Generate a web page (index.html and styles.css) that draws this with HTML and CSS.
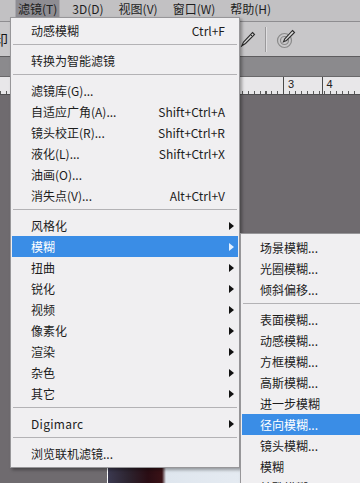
FILE: index.html
```html
<!DOCTYPE html>
<html lang="zh-CN">
<head>
    <meta charset="UTF-8">
    <meta name="viewport" content="width=device-width, initial-scale=1.0">
    <title>滤镜菜单</title>
    <link rel="stylesheet" href="styles.css">
</head>
<body>
    <div class="app">
        <div class="menubar">
            <span class="top-item active">滤镜(T)</span>
            <span class="top-item">3D(D)</span>
            <span class="top-item">视图(V)</span>
            <span class="top-item">窗口(W)</span>
            <span class="top-item">帮助(H)</span>
        </div>
        <div class="options">
            <span class="cut-label">印</span>
            <div class="tool-group">
                <svg class="tool" width="16" height="17" viewBox="0 0 16 17">
                    <path d="M12.5 1.5 L14.5 3.5 L5.5 12.5 L1.8 14.8 L3.5 11 Z" fill="#d8d8d8" stroke="#2d2d2d" stroke-width="1.1"/>
                    <path d="M10.5 3.5 L12.5 5.5" stroke="#2d2d2d" stroke-width="1"/>
                    <path d="M1.5 15.5 L4 13" stroke="#2d2d2d" stroke-width="1"/>
                </svg>
                <span class="tool-sep"></span>
                <svg class="tool" width="20" height="20" viewBox="0 0 20 20">
                    <circle cx="8.5" cy="11.5" r="7" fill="none" stroke="#8a8a8a" stroke-width="1.2"/>
                    <circle cx="8.5" cy="11.5" r="4" fill="none" stroke="#8a8a8a" stroke-width="1.2"/>
                    <path d="M16.5 1.5 L18.5 3.5 L10.5 11.5 L7.5 12.8 L8.8 9.8 Z" fill="#dcdcdc" stroke="#2d2d2d" stroke-width="1.1"/>
                </svg>
            </div>
        </div>
        <div class="tabs"></div>
        <div class="ruler">
            <span class="ruler-mark">3</span>
            <span class="ruler-mark">4</span>
        </div>
        <div class="canvas">
            <div class="photo"></div>
        </div>
    </div>

    <div class="menu menu-main">
        <div class="item"><span>动感模糊</span><span class="key">Ctrl+F</span><span></span></div>
        <div class="sep"></div>
        <div class="item"><span>转换为智能滤镜</span><span></span><span></span></div>
        <div class="sep"></div>
        <div class="item"><span>滤镜库(G)...</span><span></span><span></span></div>
        <div class="item"><span>自适应广角(A)...</span><span class="key">Shift+Ctrl+A</span><span></span></div>
        <div class="item"><span>镜头校正(R)...</span><span class="key">Shift+Ctrl+R</span><span></span></div>
        <div class="item"><span>液化(L)...</span><span class="key">Shift+Ctrl+X</span><span></span></div>
        <div class="item"><span>油画(O)...</span><span></span><span></span></div>
        <div class="item"><span>消失点(V)...</span><span class="key">Alt+Ctrl+V</span><span></span></div>
        <div class="sep"></div>
        <div class="item"><span>风格化</span><span></span><span class="arrow"></span></div>
        <div class="item active"><span>模糊</span><span></span><span class="arrow"></span></div>
        <div class="item"><span>扭曲</span><span></span><span class="arrow"></span></div>
        <div class="item"><span>锐化</span><span></span><span class="arrow"></span></div>
        <div class="item"><span>视频</span><span></span><span class="arrow"></span></div>
        <div class="item"><span>像素化</span><span></span><span class="arrow"></span></div>
        <div class="item"><span>渲染</span><span></span><span class="arrow"></span></div>
        <div class="item"><span>杂色</span><span></span><span class="arrow"></span></div>
        <div class="item"><span>其它</span><span></span><span class="arrow"></span></div>
        <div class="sep"></div>
        <div class="item"><span class="latin">Digimarc</span><span></span><span class="arrow"></span></div>
        <div class="sep"></div>
        <div class="item"><span>浏览联机滤镜...</span><span></span><span></span></div>
    </div>

    <div class="menu menu-sub">
        <div class="item"><span>场景模糊...</span></div>
        <div class="item"><span>光圈模糊...</span></div>
        <div class="item"><span>倾斜偏移...</span></div>
        <div class="sep"></div>
        <div class="item"><span>表面模糊...</span></div>
        <div class="item"><span>动感模糊...</span></div>
        <div class="item"><span>方框模糊...</span></div>
        <div class="item"><span>高斯模糊...</span></div>
        <div class="item"><span>进一步模糊</span></div>
        <div class="item active"><span>径向模糊...</span></div>
        <div class="item"><span>镜头模糊...</span></div>
        <div class="item"><span>模糊</span></div>
        <div class="item"><span>特殊模糊...</span></div>
    </div>
</body>
</html>
```

FILE: styles.css
```css
* {
    margin: 0;
    padding: 0;
    box-sizing: border-box;
}

body {
    width: 360px;
    height: 483px;
    overflow: hidden;
    position: relative;
    font-family: "Noto Sans CJK SC", "Microsoft YaHei", sans-serif;
    font-size: 12px;
    color: #1c1c1c;
    background: #6e6b6e;
}

.app {
    display: flex;
    flex-direction: column;
    height: 483px;
}

.app > div {
    flex-shrink: 0;
}

/* top menu bar */
.menubar {
    display: flex;
    align-items: flex-start;
    gap: 9px;
    height: 22px;
    padding-left: 15px;
    background: #c2c1c3;
    border-bottom: 1px solid #8e8d90;
}

.top-item {
    height: 17px;
    line-height: 17px;
    padding: 0 3px;
    color: #1e1e1e;
}

.top-item.active {
    background: #8e8d93;
    box-shadow: inset 1px 0 0 #a9a8ad, inset -1px 0 0 #a9a8ad;
    color: #202020;
}

/* options bar */
.options {
    display: flex;
    align-items: center;
    height: 35px;
    background: #c8c7c9;
    border-bottom: 1px solid #5d5c5e;
}

.cut-label {
    margin-left: -6px;
    font-size: 14px;
    color: #151515;
}

.tool-group {
    display: flex;
    align-items: center;
    gap: 9px;
    margin-left: auto;
    margin-right: 64px;
}

.tool-sep {
    width: 2px;
    height: 25px;
    border-left: 1px solid #9a999b;
    border-right: 1px solid #e0dfe1;
}

.tabs {
    height: 20px;
    background: #8b8a8d;
    border-bottom: 1px solid #6a696b;
}

/* ruler */
.ruler {
    display: flex;
    height: 18px;
    padding-left: 283px;
    background-color: #e8e7e9;
    background-image: repeating-linear-gradient(to right, #5a5a5a 0 1px, transparent 1px 5.9px);
    background-size: 100% 3px;
    background-position: 0 100%;
    background-repeat: no-repeat;
    border-bottom: 1px solid #4f4e50;
}

.ruler-mark {
    width: 59px;
    padding-left: 4px;
    border-left: 1px solid #4a4a4a;
    font-family: "Liberation Sans", Arial, sans-serif;
    font-size: 11px;
    line-height: 14px;
    color: #222;
}

.app > .canvas {
    flex: 1 1 auto;
    min-height: 0;
    overflow: hidden;
    background: #6f6b6f;
}

.photo {
    height: 60px;
    margin: 344px 0 0 107px;
    border-left: 1px dashed #ffffff;
    background: linear-gradient(to right, #3b3950 0, #2d2430 20px, #2a0d14 40px, #3a1216 54px, #dfe6ee 58px, #eef2f7 100%);
}

/* dropdown menus */
.menu {
    position: absolute;
    background: #f0eff1;
    border: 1px solid #979699;
    box-shadow: 2px 2px 3px rgba(0, 0, 0, 0.35);
}

.menu-main {
    left: 10px;
    top: 17px;
    width: 230px;
    padding: 2px 1px 3px;
}

.menu-sub {
    left: 240px;
    top: 233px;
    width: 126px;
    padding: 3px 1px;
    z-index: 1;
}

.item {
    display: grid;
    grid-template-columns: 1fr auto 5px;
    column-gap: 4px;
    align-items: center;
    height: 21px;
    padding: 0 4px 0 19px;
    white-space: nowrap;
}

.menu-sub .item {
    display: flex;
    padding-left: 18px;
}

.item.active {
    background: #3a8de6;
    color: #ffffff;
}

.key {
    text-align: right;
}

.latin {
    letter-spacing: 0.3px;
}

.arrow {
    width: 0;
    height: 0;
    border-left: 5px solid #111;
    border-top: 4px solid transparent;
    border-bottom: 4px solid transparent;
}

.item.active .arrow {
    border-left-color: #e3f0ff;
}

.sep {
    height: 1px;
    margin: 3px 1px 5px;
    background: #b3b2b5;
}
```
